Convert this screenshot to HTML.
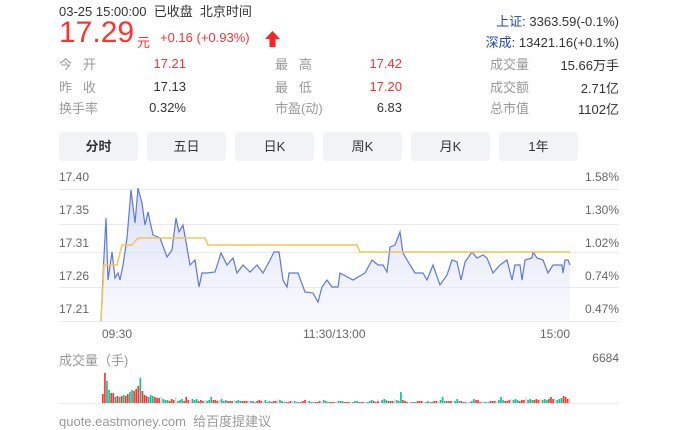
<!DOCTYPE html>
<html><head><meta charset="utf-8"><style>
body{margin:0;width:678px;height:423px;overflow:hidden;background:#fff;font-family:"Liberation Sans","Noto Sans CJK SC",sans-serif;color:#333;position:relative}
.a{position:absolute;white-space:nowrap}
.g{color:#999;font-size:13px}
.v{font-size:13px}
.r{color:#ff3333}
.tab{position:absolute;top:132px;width:79px;height:29px;background:#f2f3f5;border-radius:4px;text-align:center;line-height:29px;font-size:13px;color:#333}
.ax{position:absolute;font-size:12px;color:#666}
</style></head><body>
<div class="a v" style="left:59px;top:1px;font-size:13px">03-25 15:00:00&nbsp;&nbsp;已收盘&nbsp;&nbsp;北京时间</div>
<div class="a r" style="left:59px;top:16px;font-size:30px;line-height:34px">17.29</div>
<div class="a r" style="left:137px;top:32px;font-size:13px">元</div>
<div class="a r" style="left:160px;top:30px;font-size:13px">+0.16 (+0.93%)</div>
<svg class="a" style="left:265px;top:31px" width="15" height="16"><path d="M7.5 0 L15 8 L10.5 8 L10.5 16 L4.5 16 L4.5 8 L0 8Z" fill="#ff2222"/></svg>
<div class="a v" style="right:59px;top:11px;text-align:right"><span style="color:#2248b8">上证</span>: 3363.59(-0.1%)</div>
<div class="a v" style="right:59px;top:32px;text-align:right"><span style="color:#2248b8">深成</span>: 13421.16(+0.1%)</div>

<div class="a g" style="left:59px;top:54px">今&nbsp;&nbsp;&nbsp;开</div>
<div class="a g" style="left:59px;top:77px">昨&nbsp;&nbsp;&nbsp;收</div>
<div class="a g" style="left:59px;top:98px">换手率</div>
<div class="a v r" style="right:492px;top:56px">17.21</div>
<div class="a v" style="right:492px;top:79px">17.13</div>
<div class="a v" style="right:492px;top:100px">0.32%</div>
<div class="a g" style="left:275px;top:54px">最&nbsp;&nbsp;&nbsp;高</div>
<div class="a g" style="left:275px;top:77px">最&nbsp;&nbsp;&nbsp;低</div>
<div class="a g" style="left:275px;top:98px">市盈(动)</div>
<div class="a v r" style="right:276px;top:56px">17.42</div>
<div class="a v r" style="right:276px;top:79px">17.20</div>
<div class="a v" style="right:276px;top:100px">6.83</div>
<div class="a g" style="left:490px;top:54px">成交量</div>
<div class="a g" style="left:490px;top:77px">成交额</div>
<div class="a g" style="left:490px;top:98px">总市值</div>
<div class="a v" style="right:59px;top:55px">15.66万手</div>
<div class="a v" style="right:59px;top:78px">2.71亿</div>
<div class="a v" style="right:59px;top:99px">1102亿</div>

<div class="tab" style="left:59px;font-weight:bold">分时</div>
<div class="tab" style="left:147px">五日</div>
<div class="tab" style="left:235px">日K</div>
<div class="tab" style="left:323px">周K</div>
<div class="tab" style="left:411px">月K</div>
<div class="tab" style="left:499px">1年</div>

<div class="ax" style="left:59px;top:170px">17.40</div>
<div class="ax" style="left:59px;top:203px">17.35</div>
<div class="ax" style="left:59px;top:236px">17.31</div>
<div class="ax" style="left:59px;top:269px">17.26</div>
<div class="ax" style="left:59px;top:302px">17.21</div>
<div class="ax" style="right:59px;top:170px">1.58%</div>
<div class="ax" style="right:59px;top:203px">1.30%</div>
<div class="ax" style="right:59px;top:236px">1.02%</div>
<div class="ax" style="right:59px;top:269px">0.74%</div>
<div class="ax" style="right:59px;top:302px">0.47%</div>
<div class="ax" style="left:102px;top:327px">09:30</div>
<div class="ax" style="left:303px;top:327px">11:30/13:00</div>
<div class="ax" style="left:540px;top:327px">15:00</div>
<div class="ax" style="left:59px;top:350px;font-size:13px;color:#999">成交量（手)</div>
<div class="ax" style="right:59px;top:351px">6684</div>
<div class="a g" style="left:59px;top:411px">quote.eastmoney.com&nbsp;&nbsp;给百度提建议</div>

<svg class="a" style="left:0;top:0" width="678" height="423">
<defs><linearGradient id="f" x1="0" y1="0" x2="0" y2="1"><stop offset="0" stop-color="#c7cff5" stop-opacity=".7"/><stop offset="1" stop-color="#eef0fc" stop-opacity=".4"/></linearGradient></defs>
<g stroke="#eaeaea" stroke-width="1">
<line x1="59" y1="189.5" x2="619" y2="189.5"/><line x1="59" y1="224.5" x2="619" y2="224.5"/><line x1="59" y1="252.5" x2="619" y2="252.5"/><line x1="59" y1="287.5" x2="619" y2="287.5"/><line x1="59" y1="321.5" x2="619" y2="321.5"/>
<line x1="59" y1="403.5" x2="619" y2="403.5"/>
</g>
<polygon id="fill" fill="url(#f)" points=""/>
<polyline id="bl" fill="none" stroke="#5b78e8" stroke-width="1.2" points="101,321 103,275 106,218 108,280 112,252 115,278 118,273 120,280 123,265 127,238 131,190 135,223 138,188 142,203 145,225 148,212 153,235 160,238 167,257 172,250 176,218 179,232 183,225 190,265 195,260 199,287 202,273 207,273 215,272 221,253 227,265 233,258 237,273 243,265 250,272 257,265 263,273 270,260 274,252 279,252 283,280 287,287 289,273 298,273 305,292 313,293 318,302 322,287 327,280 332,287 338,287 340,273 353,280 365,273 372,260 378,265 383,265 387,272 390,247 395,245 400,232 403,253 410,265 415,273 423,273 427,280 433,265 440,285 447,275 452,260 457,262 461,280 465,262 472,252 477,258 483,255 487,258 493,273 500,265 507,260 512,280 515,265 520,265 522,280 525,260 532,258 533,252 537,258 543,260 548,273 553,265 562,265 563,273 565,260 568,260 570,265"/>
<polyline fill="none" stroke="#f5c451" stroke-width="1.5" points="101,321 104,265 117,265 122,245 132,245 138,238 205,238 208,245 357,245 360,252 570,252"/>
<g id="vol"></g>
</svg>
<script>
var p=document.getElementById('bl').getAttribute('points');
document.getElementById('fill').setAttribute('points',p+' 570,321 101,321');
var hs=[9,30,22,13,10,10,6,7,6,7,8,7,9,11,13,12,14,17,25,12,8,7,6,8,7,6,5,5,6,4,3,3,2,4,3,6,2,3,4,2,6,3,3,4,3,4,2,3,2,3,2,3,6,3,3,2,3,4,2,3,2,2,2,3,2,3,2,2,2,2,2,2,2,1,2,3,2,2,3,1,2,1,2,2,4,3,2,1,1,1,2,2,2,1,1,1,2,3,2,2,1,1,1,1,2,2,3,2,1,1,1,1,1,2,2,2,1,1,1,1,1,2,2,1,1,1,1,1,2,3,2,1,2,2,3,4,3,2,2,2,4,3,2,11,3,2,1,1,1,1,1,2,2,2,1,1,2,1,1,2,2,2,3,6,2,2,2,2,2,2,4,2,2,1,1,1,1,2,4,3,3,1,2,1,1,1,2,2,2,2,3,6,3,2,2,3,4,3,4,3,2,3,3,6,3,4,3,3,4,3,4,3,4,3,4,6,4,4,3,4,5,7,6,4,5];
var s='',c=['#ff3333','#15c08f','#ff3333','#dcdcdc','#15c08f','#ff3333','#15c08f'];
var w=469/hs.length;
for(var i=0;i<hs.length;i++){var h=hs[i];var col=i<22?(i%4==2||i%5==3?'#15c08f':'#ff3333'):c[(i*5+3)%7];
s+='<rect x="'+(102+i*w).toFixed(2)+'" y="'+(403-h)+'" width="'+(w*0.8).toFixed(2)+'" height="'+h+'" fill="'+col+'"/>';}
document.getElementById('vol').innerHTML=s;
</script>
</body></html>
